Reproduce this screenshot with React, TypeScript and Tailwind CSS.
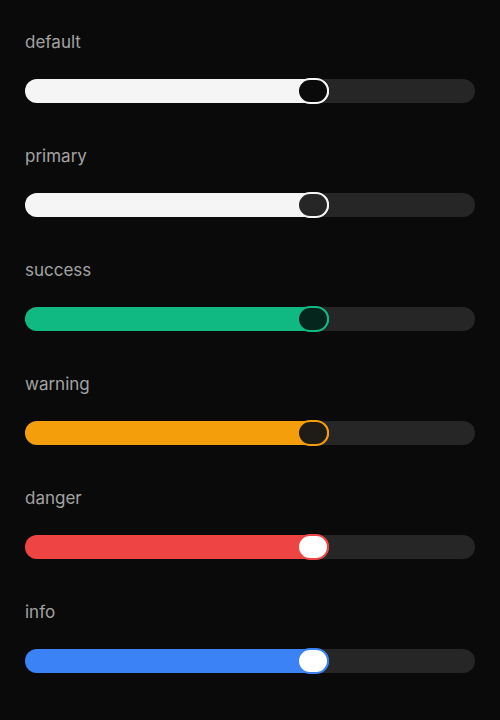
import React from "react";

type Row = { label: string; fill: string; thumbBorder: string; thumbBg: string };

const rows: Row[] = [
  { label: "default", fill: "bg-[#f5f5f5]", thumbBorder: "border-[#f5f5f5]", thumbBg: "bg-[#0a0a0a]" },
  { label: "primary", fill: "bg-[#f5f5f5]", thumbBorder: "border-[#f5f5f5]", thumbBg: "bg-[#262626]" },
  { label: "success", fill: "bg-[#10b981]", thumbBorder: "border-[#10b981]", thumbBg: "bg-[#05261c]" },
  { label: "warning", fill: "bg-[#f59e0b]", thumbBorder: "border-[#f59e0b]", thumbBg: "bg-[#1f1b16]" },
  { label: "danger", fill: "bg-[#ef4444]", thumbBorder: "border-[#ef4444]", thumbBg: "bg-white" },
  { label: "info", fill: "bg-[#3b82f6]", thumbBorder: "border-[#3b82f6]", thumbBg: "bg-white" },
];

export default function App() {
  return (
    <div
      className="w-[500px] h-[720px] bg-[#0a0a0a] px-[25px] pt-[30px] flex flex-col gap-[41px]"
      style={{ fontFamily: "Inter, 'Noto Sans', sans-serif" }}
    >
      {rows.map((r) => (
        <div key={r.label} className="flex flex-col gap-[25px]">
          <div className="text-[17px] leading-[24px] font-normal text-[#a3a3a3]">{r.label}</div>
          <div className="relative h-[24px] w-[450px] rounded-full bg-[#262626]">
            <div className={`absolute left-0 top-0 h-[24px] w-[304px] rounded-full ${r.fill}`} />
            <div
              className={`absolute left-[272px] top-[-1px] h-[26px] w-[32px] rounded-full border-2 ${r.thumbBorder} ${r.thumbBg}`}
            />
          </div>
        </div>
      ))}
    </div>
  );
}
